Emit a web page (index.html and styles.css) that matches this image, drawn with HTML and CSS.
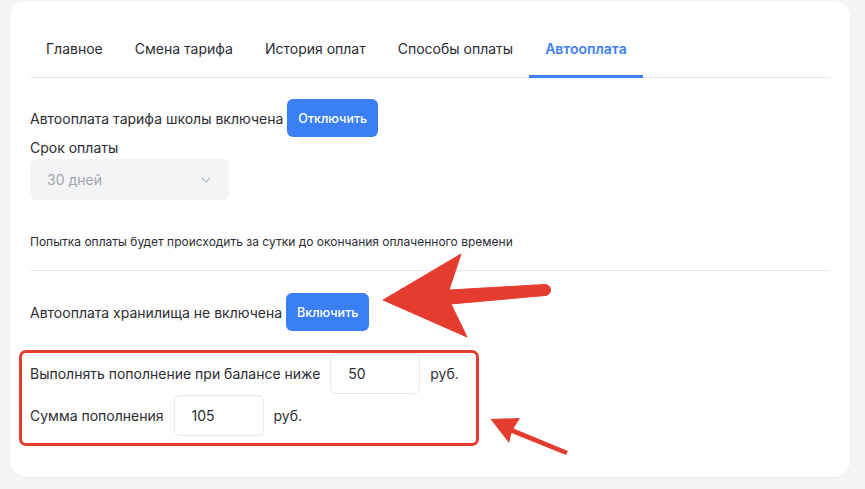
FILE: index.html
```html
<!DOCTYPE html>
<html lang="ru">
<head>
    <meta charset="UTF-8">
    <meta name="viewport" content="width=device-width, initial-scale=1.0">
    <title>Автооплата</title>
    <link rel="stylesheet" href="styles.css">
</head>
<body>
    <div class="card">
        <div class="tabs">
            <div class="tab">Главное</div>
            <div class="tab">Смена тарифа</div>
            <div class="tab">История оплат</div>
            <div class="tab">Способы оплаты</div>
            <div class="tab active">Автооплата</div>
        </div>

        <div class="section">
            <div class="row">
                <span>Автооплата тарифа школы включена</span>
                <button class="btn">Отключить</button>
            </div>
            <div class="label">Срок оплаты</div>
            <div class="select">
                <span>30 дней</span>
                <svg width="10" height="6" viewBox="0 0 10 6"><path d="M1 1l4 4 4-4" fill="none" stroke="#b5bac2" stroke-width="1.2"/></svg>
            </div>
            <p class="note">Попытка оплаты будет происходить за сутки до окончания оплаченного времени</p>
        </div>

        <div class="section second">
            <div class="row">
                <span>Автооплата хранилища не включена</span>
                <button class="btn">Включить</button>
            </div>
            <div class="amounts">
                <div class="amount-row">
                    <span>Выполнять пополнение при балансе ниже</span>
                    <div class="amount-input">50</div>
                    <span>руб.</span>
                </div>
                <div class="amount-row">
                    <span>Сумма пополнения</span>
                    <div class="amount-input">105</div>
                    <span>руб.</span>
                </div>
            </div>
        </div>

        <svg class="arrows" width="865" height="489" viewBox="0 0 865 489">
            <path d="M383 300 L461 254 L449 290 L545 284.5 A5.5 5.5 0 0 1 545 295.5 L451 304 L467 337 Z" fill="#e53c30" stroke="#e53c30" stroke-width="1" stroke-linejoin="round"/>
            <path d="M490.5 419 L520 418 L513.5 428.5 L568 451 L566 455 L511.5 433 L509 443 Z" fill="#e53c30"/>
        </svg>
    </div>
</body>
</html>
```

FILE: styles.css
```css
body {
    margin: 0;
    font-family: Inter, "Noto Sans", sans-serif;
    font-size: 14px;
    color: #2b2d33;
    background: #f4f5f7;
    padding: 1px 15px 12px 10px;
}

.card {
    position: relative;
    background: #fff;
    border-radius: 16px;
    padding: 20px 20px 31px;
    box-shadow: 0 1px 3px rgba(0, 0, 0, 0.04);
}

.tabs {
    display: flex;
    border-bottom: 1px solid #e8e9ee;
}

.tab {
    padding: 18px 16px 18px;
    line-height: 20px;
}

.tab.active {
    color: #3f80f6;
    font-weight: 600;
    border-bottom: 3px solid #3f80f6;
    margin-bottom: -1px;
    padding-bottom: 16px;
}

.section {
    padding-top: 21px;
    padding-bottom: 20px;
    border-bottom: 1px solid #e8e9ee;
}

.section.second {
    border-bottom: none;
    padding-top: 22px;
    padding-bottom: 0;
}

.row {
    display: flex;
    align-items: center;
    gap: 4px;
}

.btn {
    height: 38px;
    padding: 0 11px;
    border: none;
    border-radius: 6px;
    background: #3a7ff6;
    color: #fff;
    font-family: inherit;
    font-size: 12.5px;
    font-weight: 500;
}

.label {
    margin-top: 1px;
    line-height: 20px;
}

.select {
    width: 199px;
    height: 41px;
    margin-top: 1px;
    box-sizing: border-box;
    display: flex;
    align-items: center;
    justify-content: space-between;
    padding: 0 18px 0 17px;
    background: #f3f4f6;
    border-radius: 6px;
    color: #a2a6ad;
}

.note {
    margin: 34px 0 0;
    font-size: 12px;
    line-height: 16px;
}

.amounts {
    display: inline-flex;
    flex-direction: column;
    gap: 1px;
    margin: 19px 0 0 -11px;
    padding: 0 17px 7px 8px;
    border: 3px solid #e53c30;
    border-radius: 7px;
}

.amount-row {
    display: flex;
    align-items: center;
    gap: 10px;
}

.amount-input {
    width: 90px;
    height: 41px;
    box-sizing: border-box;
    border: 1px solid #e8e9ee;
    border-radius: 6px;
    padding-left: 17px;
    display: flex;
    align-items: center;
}

.arrows {
    position: absolute;
    left: -10px;
    top: -1px;
    pointer-events: none;
}
```
